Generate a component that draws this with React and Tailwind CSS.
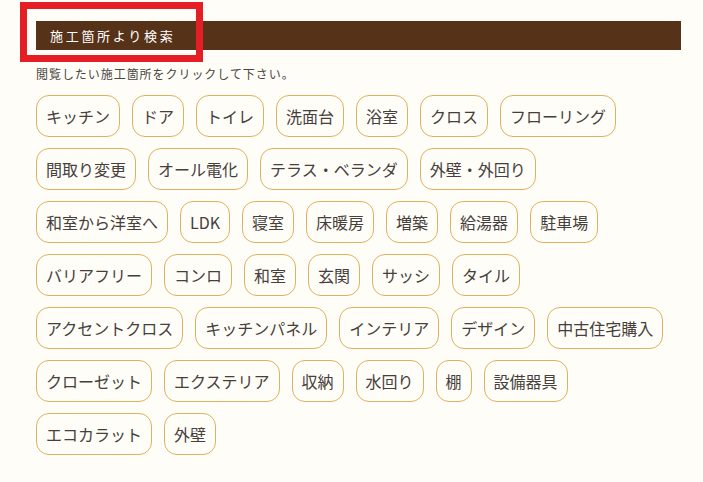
import React from 'react';

const rows = [
  ['キッチン', 'ドア', 'トイレ', '洗面台', '浴室', 'クロス', 'フローリング'],
  ['間取り変更', 'オール電化', 'テラス・ベランダ', '外壁・外回り'],
  ['和室から洋室へ', 'LDK', '寝室', '床暖房', '増築', '給湯器', '駐車場'],
  ['バリアフリー', 'コンロ', '和室', '玄関', 'サッシ', 'タイル'],
  ['アクセントクロス', 'キッチンパネル', 'インテリア', 'デザイン', '中古住宅購入'],
  ['クローゼット', 'エクステリア', '収納', '水回り', '棚', '設備器具'],
  ['エコカラット', '外壁'],
];

const font = { fontFamily: '"Noto Sans CJK JP", "Noto Sans", sans-serif' };

const Tag = ({ label }) => (
  <a
    href="#"
    className="h-[42px] px-[9px] flex items-center border border-[#dfb15f] rounded-[13px] bg-[#fffdf8] text-[16px] text-[#45403b] whitespace-nowrap"
  >
    {label}
  </a>
);

const App = () => {
  return (
    <div className="relative min-h-screen bg-[#fffdf7]" style={font}>
      <div className="w-[681px] pl-[36px] pt-[21px] pb-6">
        <div className="h-[29px] bg-[#553218] flex items-center pl-[14px]">
          <h2 className="text-[13px] text-white tracking-[2.7px] leading-none">施工箇所より検索</h2>
        </div>

        <p className="mt-[15px] h-[18px] leading-[18px] text-[12px] tracking-[0.95px] text-[#4a4642]">
          閲覧したい施工箇所をクリックして下さい。
        </p>

        <div className="mt-[12px] flex flex-col gap-y-[11px]">
          {rows.map((row, i) => (
            <div key={i} className="flex gap-x-3">
              {row.map((label) => (
                <Tag key={label} label={label} />
              ))}
            </div>
          ))}
        </div>
      </div>

      {/* red highlight frame */}
      <div className="absolute left-[20px] top-[2px] w-[183px] h-[60px] border-[7px] border-[#e51d25] pointer-events-none" />
    </div>
  );
};

export default App;
